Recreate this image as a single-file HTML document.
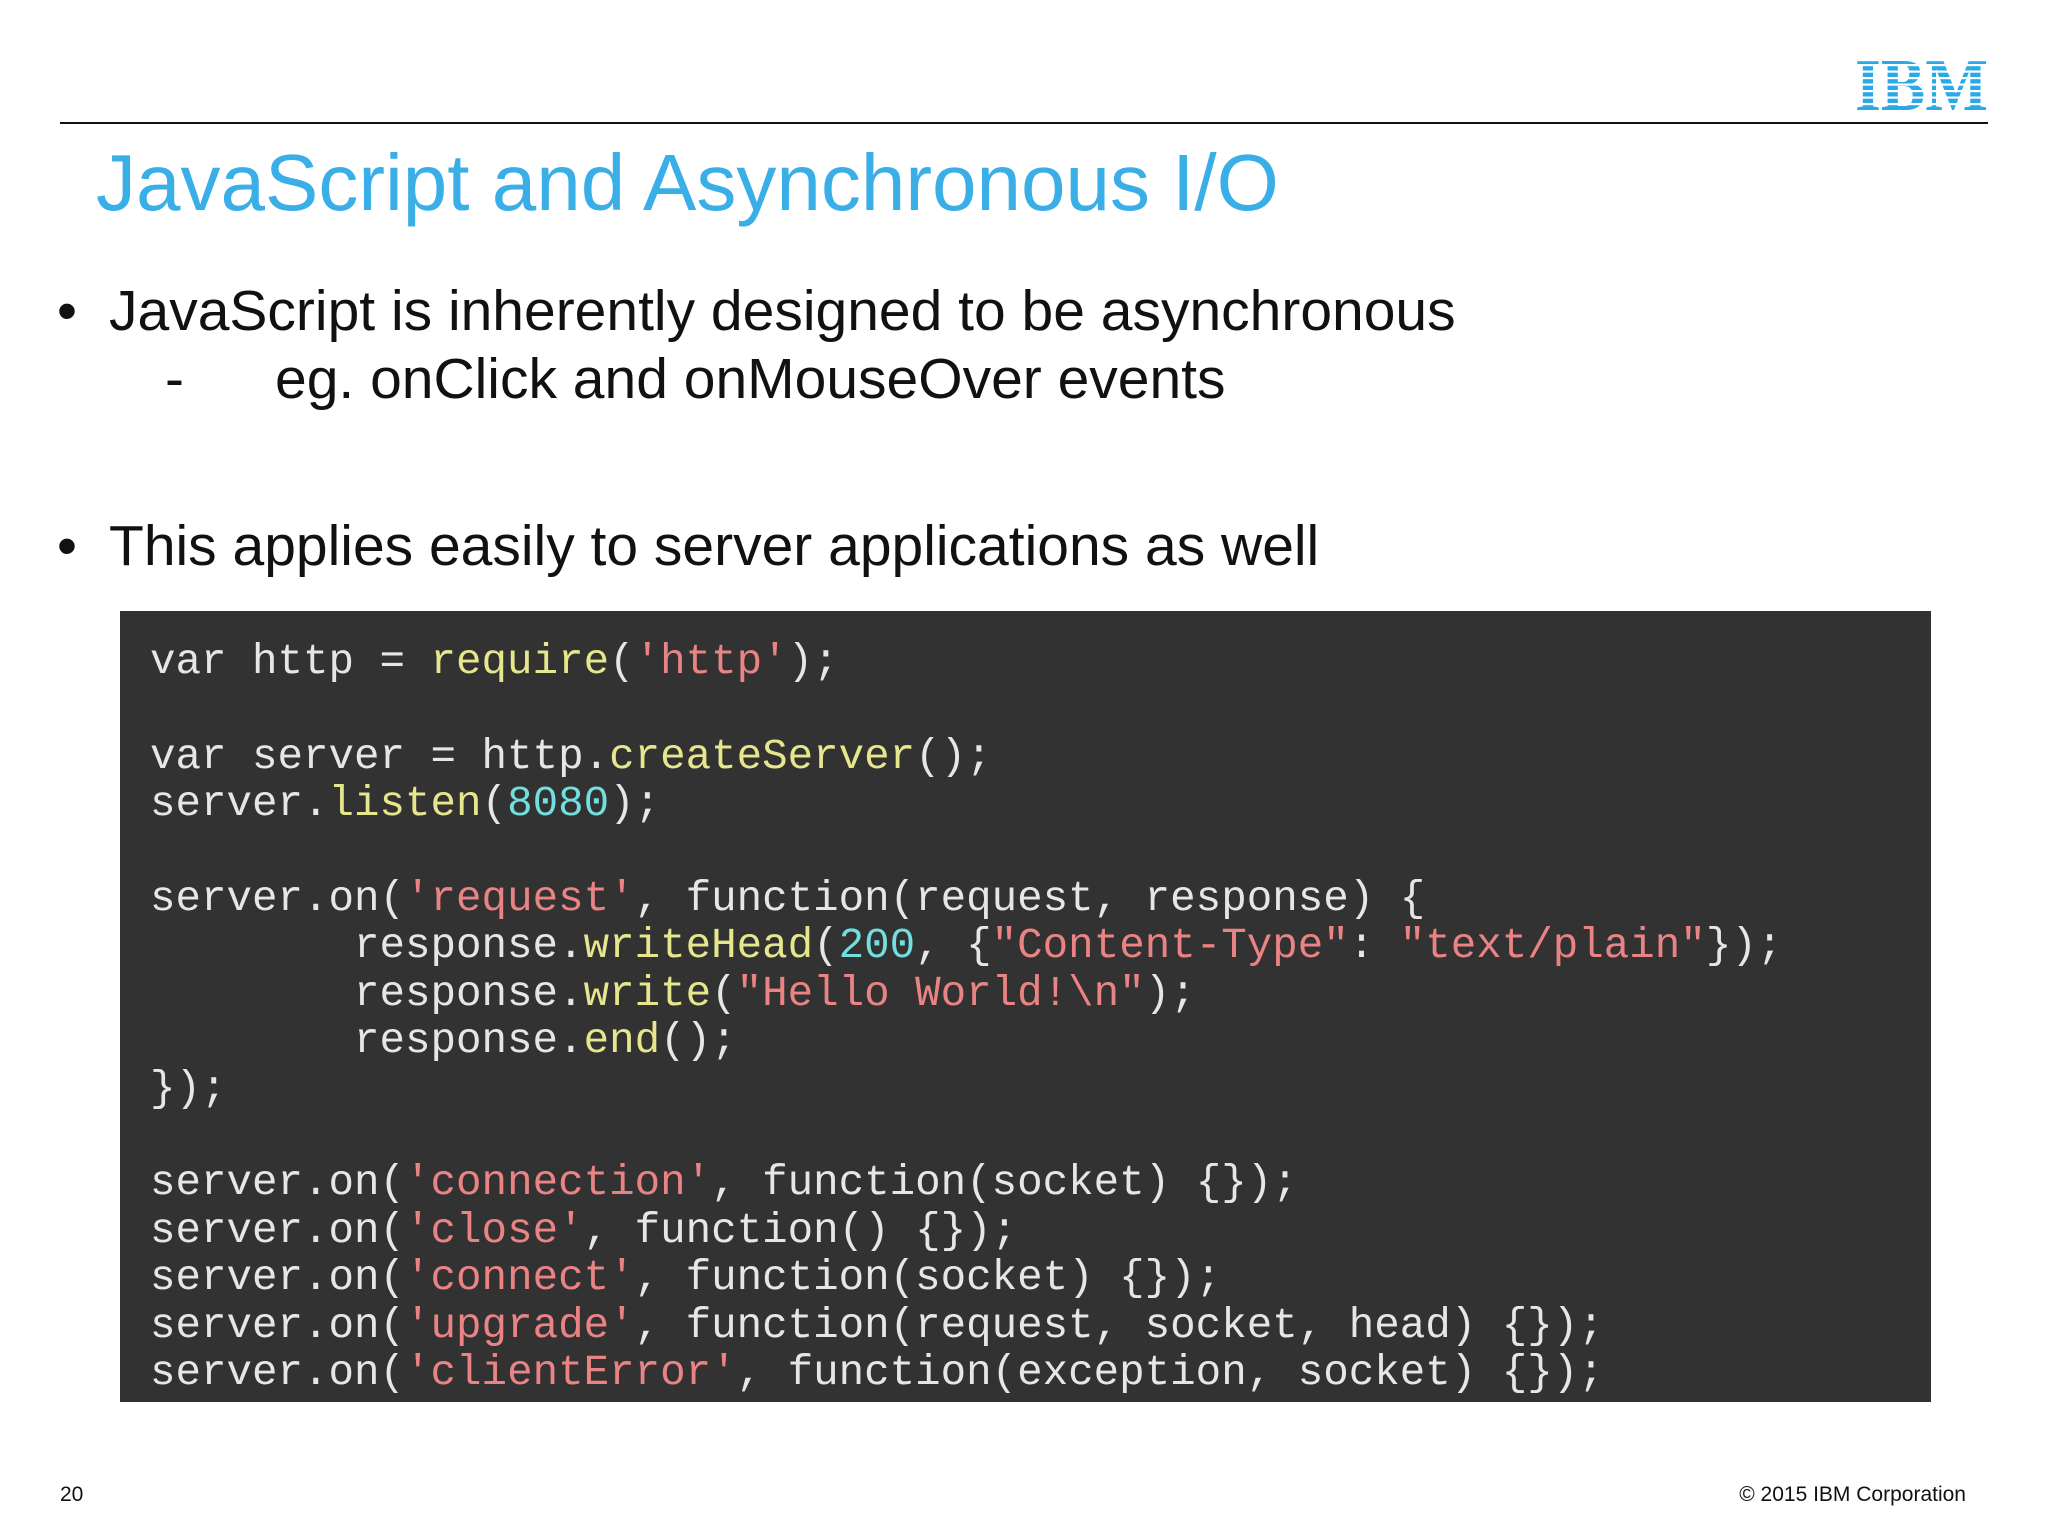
<!DOCTYPE html>
<html><head><meta charset="utf-8"><style>
html,body{margin:0;padding:0}
body{width:2048px;height:1536px;background:#fff;position:relative;overflow:hidden;font-family:"Liberation Sans",sans-serif}
.hr{position:absolute;left:60px;top:122px;width:1928px;height:2px;background:#111}
.title{position:absolute;left:96px;top:133px;font-size:80px;color:#3aaee6;white-space:nowrap;line-height:100px}
.t{position:absolute;font-size:57px;color:#111;white-space:nowrap;line-height:64px}
.code{position:absolute;left:120px;top:611px;width:1811px;height:791px;background:#333233}
pre{margin:0;position:absolute;left:30px;top:28px;font-family:"Liberation Mono",monospace;font-size:42.5px;line-height:47.4px;color:#e6e6e6}
.y{color:#e6e68c}.p{color:#ea8383}.c{color:#72dede}
.foot{position:absolute;top:1483px;font-size:21px;color:#111}
.logo{position:absolute;left:1855px;top:57px}
</style></head><body>
<svg class="logo" width="134" height="56" viewBox="0 0 134 56">
<text x="0" y="53" font-family="Liberation Serif" font-weight="bold" font-size="74" fill="#2aa8e8" textLength="133" lengthAdjust="spacingAndGlyphs">IBM</text>
<g fill="#fff">
<rect x="0" y="7" width="134" height="2.2"/><rect x="0" y="13.5" width="134" height="2.2"/><rect x="0" y="20" width="134" height="2.2"/><rect x="0" y="26.5" width="134" height="2.2"/><rect x="0" y="33" width="134" height="2.2"/><rect x="0" y="39.5" width="134" height="2.2"/><rect x="0" y="46" width="134" height="2.2"/>
</g></svg>
<div class="hr"></div>
<div class="title">JavaScript and Asynchronous I/O</div>
<div class="t" style="left:57px;top:279px">•</div>
<div class="t" style="left:109px;top:279px">JavaScript is inherently designed to be asynchronous</div>
<div class="t" style="left:165px;top:347px">-</div>
<div class="t" style="left:275px;top:347px">eg. onClick and onMouseOver events</div>
<div class="t" style="left:57px;top:514px">•</div>
<div class="t" style="left:109px;top:514px">This applies easily to server applications as well</div>
<div class="code"><pre>var http = <span class="y">require</span>(<span class="p">'http'</span>);

var server = http.<span class="y">createServer</span>();
server.<span class="y">listen</span>(<span class="c">8080</span>);

server.on(<span class="p">'request'</span>, function(request, response) {
        response.<span class="y">writeHead</span>(<span class="c">200</span>, {<span class="p">"Content-Type"</span>: <span class="p">"text/plain"</span>});
        response.<span class="y">write</span>(<span class="p">"Hello World!\n"</span>);
        response.<span class="y">end</span>();
});

server.on(<span class="p">'connection'</span>, function(socket) {});
server.on(<span class="p">'close'</span>, function() {});
server.on(<span class="p">'connect'</span>, function(socket) {});
server.on(<span class="p">'upgrade'</span>, function(request, socket, head) {});
server.on(<span class="p">'clientError'</span>, function(exception, socket) {});</pre></div>
<div class="foot" style="left:60px">20</div>
<div class="foot" style="right:82px">© 2015 IBM Corporation</div>
</body></html>
